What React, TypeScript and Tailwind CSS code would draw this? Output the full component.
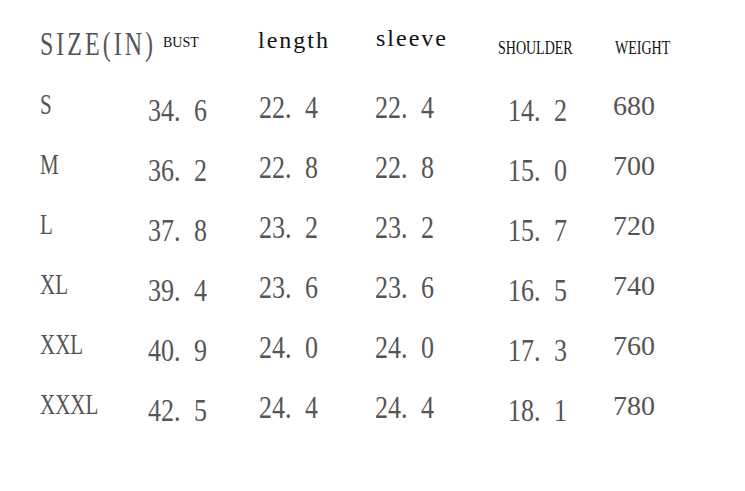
const rows = [
  { size: 'S', bust: '34.6', length: '22.4', sleeve: '22.4', shoulder: '14.2', weight: '680' },
  { size: 'M', bust: '36.2', length: '22.8', sleeve: '22.8', shoulder: '15.0', weight: '700' },
  { size: 'L', bust: '37.8', length: '23.2', sleeve: '23.2', shoulder: '15.7', weight: '720' },
  { size: 'XL', bust: '39.4', length: '23.6', sleeve: '23.6', shoulder: '16.5', weight: '740' },
  { size: 'XXL', bust: '40.9', length: '24.0', sleeve: '24.0', shoulder: '17.3', weight: '760' },
  { size: 'XXXL', bust: '42.5', length: '24.4', sleeve: '24.4', shoulder: '18.1', weight: '780' },
];

const serif = "font-['Liberation_Serif','Times_New_Roman',serif]";

// decimal numbers are drawn like the chart's monospace font: the dot gets a full cell
function Num({ value }: { value: string }) {
  const [a, b] = value.split('.');
  return (
    <span className="inline-block origin-top scale-y-[1.25] text-[26px] leading-none whitespace-nowrap">
      <span>{a}</span>
      <span className="inline-block w-[20px]">.</span>
      <span>{b}</span>
    </span>
  );
}

export default function App() {
  return (
    <div className={`w-[745px] h-[491px] bg-white text-[#555] ${serif}`}>
      {/* header */}
      <div className="flex items-start pl-[40px] pt-[26px] h-[90px]">
        <div className="w-[123px] pt-[1px]">
          <span className="inline-block origin-top scale-y-[1.38] text-[24px] leading-none tracking-[3px]">SIZE(IN)</span>
        </div>
        <div className="w-[95px] pt-[10px] text-[14px] leading-none text-[#111]">BUST</div>
        <div className="w-[118px] pt-[2px] text-[24px] leading-none tracking-[2px] text-[#111]">length</div>
        <div className="w-[122px] text-[24px] leading-none tracking-[2px] text-[#111]">sleeve</div>
        <div className="w-[117px] pt-[8px]">
          <span className="inline-block origin-top scale-y-[1.3] text-[14px] leading-none text-[#111]">SHOULDER</span>
        </div>
        <div className="pt-[8px]">
          <span className="inline-block origin-top scale-y-[1.3] text-[14px] leading-none text-[#111]">WEIGHT</span>
        </div>
      </div>

      {/* body */}
      <div className="pl-[40px]">
        {rows.map((r) => (
          <div key={r.size} className="grid grid-cols-[108px_111px_116px_133px_105px_1fr] items-start h-[60px]">
            <div>
              <span className="inline-block origin-top scale-y-[1.4] text-[21px] leading-none">{r.size}</span>
            </div>
            <div className="pt-[5px]"><Num value={r.bust} /></div>
            <div className="pt-[2px]"><Num value={r.length} /></div>
            <div className="pt-[2px]"><Num value={r.sleeve} /></div>
            <div className="pt-[5px]"><Num value={r.shoulder} /></div>
            <div className="pt-[2px] text-[28px] leading-none">{r.weight}</div>
          </div>
        ))}
      </div>
    </div>
  );
}
